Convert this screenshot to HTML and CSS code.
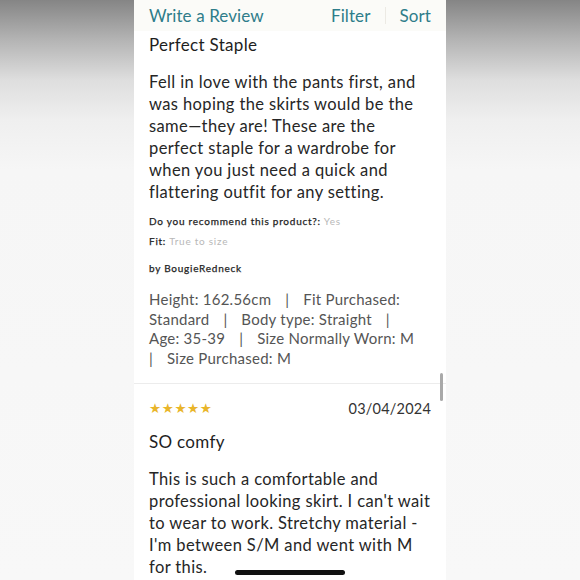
FILE: index.html
```html
<!DOCTYPE html>
<html>
<head>
<meta charset="utf-8">
<link rel="stylesheet" href="styles.css">
</head>
<body>
<div class="screen">
  <div class="panel">
    <div class="topbar">
      <span class="tb-link">Write a Review</span>
      <div class="tb-right">
        <span class="tb-link">Filter</span>
        <span class="tb-sep"></span>
        <span class="tb-link">Sort</span>
      </div>
    </div>
    <div class="review first">
      <h2 class="title">Perfect Staple</h2>
      <p class="body">Fell in love with the pants first, and was hoping the skirts would be the same—they are! These are the perfect staple for a wardrobe for when you just need a quick and flattering outfit for any setting.</p>
      <p class="meta">Do you recommend this product?: <span class="muted">Yes</span></p>
      <p class="meta">Fit: <span class="muted">True to size</span></p>
      <p class="meta author">by BougieRedneck</p>
      <p class="stats">Height: 162.56cm&ensp;&thinsp; |&ensp;&thinsp; Fit Purchased: Standard&ensp;&thinsp; |&ensp;&thinsp; Body type: Straight&ensp;&thinsp; |&ensp;&thinsp; Age: 35-39&ensp;&thinsp; |&ensp;&thinsp; Size Normally Worn: M&ensp;&thinsp; |&ensp;&thinsp; Size Purchased: M</p>
    </div>
    <div class="review second">
      <div class="rowtop">
        <span class="stars">★★★★★</span>
        <span class="date">03/04/2024</span>
      </div>
      <h2 class="title t2">SO comfy</h2>
      <p class="body">This is such a comfortable and professional looking skirt. I can't wait to wear to work. Stretchy material - I'm between S/M and went with M for this.</p>
    </div>
    <div class="scrollbar"></div>
    <div class="homebar"></div>
  </div>
</div>
</body>
</html>
```
FILE: styles.css
```css
html, body {
  margin: 0;
  padding: 0;
}
body {
  width: 580px;
  height: 580px;
  overflow: hidden;
  background: linear-gradient(to bottom, #858585 0px, #b4b4b4 40px, #dedede 80px, #efefef 120px, #f6f6f6 170px, #f8f8f8 580px);
  font-family: Lato, "Noto Sans", sans-serif;
}
.screen {
  display: flex;
  justify-content: center;
  height: 580px;
}
.panel {
  position: relative;
  width: 312px;
  background: #fff;
  height: 580px;
  overflow: hidden;
}
.topbar {
  display: flex;
  justify-content: space-between;
  align-items: center;
  height: 31px;
  padding: 0 15px;
  background: #fbfbf8;
}
.tb-right {
  display: flex;
  align-items: center;
}
.tb-link {
  color: #2e7d8a;
  font-size: 17px;
  letter-spacing: 0.1px;
}
.tb-sep {
  width: 1px;
  height: 17px;
  background: #eceae4;
  margin: 0 14px;
}
.review {
  padding: 0 15px 0 15px;
}
.first {
  padding-bottom: 14px;
  border-bottom: 1px solid #ececec;
}
.title {
  margin: 0;
  font-weight: 400;
  font-size: 17px;
  color: #1e1e1e;
  line-height: 26px;
  letter-spacing: 0.3px;
}
.first .title {
  margin-top: 1px;
}
.body {
  margin: 13px 0 0;
  font-size: 16.5px;
  line-height: 22px;
  color: #262626;
  letter-spacing: 0.38px;
}
.meta {
  margin: 0;
  font-size: 10px;
  line-height: 20px;
  color: #1e1e1e;
  font-weight: 400;
  letter-spacing: 0.75px;
  -webkit-text-stroke: 0.25px #1e1e1e;
}
.first .body + .meta {
  margin-top: 8px;
}
.muted {
  color: #b8b8b8;
  -webkit-text-stroke: 0;
}
.author {
  margin-top: 7px;
}
.stats {
  margin: 12px 0 0;
  padding-right: 2px;
  font-size: 15px;
  line-height: 19.7px;
  color: #555;
  letter-spacing: 0.25px;
}
.rowtop {
  display: flex;
  justify-content: space-between;
  align-items: center;
  margin-top: 16px;
}
.stars {
  color: #e9b52a;
  font-size: 13.5px;
  letter-spacing: 0.6px;
  font-family: "DejaVu Sans", sans-serif;
}
.date {
  font-size: 14.5px;
  color: #333;
  letter-spacing: 0.2px;
}
.t2 {
  margin-top: 12px;
}
.second .body {
  margin-top: 13px;
}
.scrollbar {
  position: absolute;
  left: 306px;
  top: 373px;
  width: 3px;
  height: 28px;
  border-radius: 2px;
  background: #a9a9a9;
}
.homebar {
  position: absolute;
  left: 101px;
  top: 570px;
  width: 110px;
  height: 5px;
  border-radius: 3px;
  background: #111;
}
```
